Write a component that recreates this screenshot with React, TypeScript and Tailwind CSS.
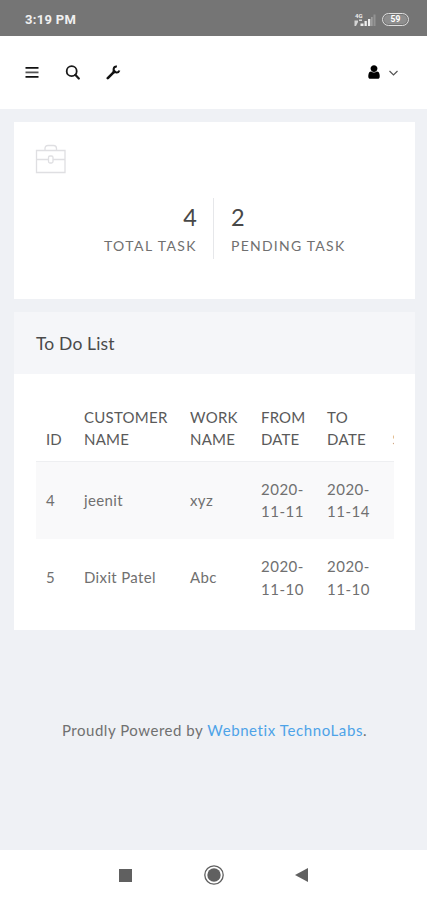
type Task = {
  id: number
  customer: string
  work: string
  from: string[]
  to: string[]
}

const tasks: Task[] = [
  { id: 4, customer: "jeenit", work: "xyz", from: ["2020-", "11-11"], to: ["2020-", "11-14"] },
  { id: 5, customer: "Dixit Patel", work: "Abc", from: ["2020-", "11-10"], to: ["2020-", "11-10"] },
]

function StatusBar() {
  return (
    <div className="h-9 shrink-0 bg-[#757575] flex items-center justify-between pl-[25px] pr-[18px] pt-[3px]">
      <span className="font-['Roboto',sans-serif] font-bold text-[13px] leading-4 tracking-[0.3px] text-[#f0f0f0]">3:19 PM</span>
      <div className="flex items-center gap-[5px]">
        <svg width="24" height="14" viewBox="0 0 24 14" fill="#eeeeee">
          <text x="2" y="5" fontSize="6" fontWeight="700" fontFamily="Roboto, sans-serif">4G</text>
          <path d="M1.500 7.500h3.500v1.500l-2 4h-1.500zM6 6.500h3v1.500h-3z" opacity=".8" />
          <path d="M7.500 10.500h3v2.500h-3zM11.500 8h2.300v5h-2.300zM15 6h2.300v7h-2.300z" />
          <path d="M18.300 4h1.200v9h-1.200z" opacity=".5" />
          <path d="M20.500 1.500h2v11.500h-2z" opacity=".25" />
        </svg>
        <div className="w-[27px] h-[13px] rounded-full border-[1.5px] border-[#dedede] p-px">
          <div className="h-full w-full rounded-full bg-[#8d8d8d] flex items-center justify-center font-['Roboto',sans-serif] font-bold text-[8.5px] leading-none text-white">
            59
          </div>
        </div>
      </div>
    </div>
  )
}

function TopBar() {
  return (
    <header className="h-[73px] shrink-0 bg-white flex items-center justify-between pl-[25px] pr-[28px] pb-px">
      <div className="flex items-center">
        <svg width="14" height="14" viewBox="0 0 14 14">
          <path d="M.5 2h13v1.800H.5zM.5 11h13v1.800H.5z" fill="#111" />
          <path d="M.5 6.500h13v1.800H.5z" fill="#555" />
        </svg>
        <svg className="ml-[26px] mt-px" width="15" height="15" viewBox="0 0 15 15" fill="none" stroke="#1a1a1a">
          <circle cx="6.700" cy="6.200" r="5" strokeWidth="1.800" />
          <path d="M10.300 9.800l3.500 3.700" strokeWidth="2.200" strokeLinecap="round" />
        </svg>
        <svg className="ml-[26px] mt-px" width="15" height="15" viewBox="0 0 15 15" fill="none" stroke="#111">
          <path d="M1.800 13.200l6.500-6.500" strokeWidth="2.600" strokeLinecap="round" />
          <path d="M10.900 1.500a3 3 0 1 0 2.500 4" strokeWidth="2" />
          <path d="M7.300 5.500l2.200 2.200" strokeWidth="2.500" />
        </svg>
      </div>
      <div className="flex items-center gap-[6px]">
        <svg width="16" height="16" viewBox="0 0 1792 1792" fill="#000">
          <path d="M1536 1399q0 109-62.500 187t-150.500 78h-854q-88 0-150.500-78t-62.500-187q0-85 8.500-160.500t31.500-152 58.500-131 94-89 134.500-34.500q131 128 313 128t313-128q76 0 134.500 34.500t94 89 58.500 131 31.500 152 8.500 160.500zm-256-887q0 159-112.500 271.500t-271.500 112.500-271.500-112.500-112.500-271.500 112.500-271.500 271.500-112.500 271.500 112.500 112.500 271.500z" />
        </svg>
        <svg className="mt-px" width="11" height="8" viewBox="0 0 11 8" fill="none" stroke="#555" strokeWidth="1.200">
          <path d="M1.500 2l4 4 4-4" />
        </svg>
      </div>
    </header>
  )
}

function Summary() {
  return (
    <section className="h-[177px] bg-white pt-[22px]">
      <svg className="ml-[21px]" width="32" height="31" viewBox="0 0 32 31" fill="none" stroke="#dfdfe2" strokeWidth="1.300">
        <path d="M1.500 6.500h28.500v22H1.500zM1.500 15.500h12M18 15.500h12" />
        <path d="M10 6.500V4.500q0-3 3-3h5.500q3 0 3 3v2" />
        <rect x="13.500" y="12" width="4.500" height="7" rx="1.500" />
      </svg>
      <div className="mt-[23px] flex">
        <div className="w-[200px] h-[61px] pr-[16px] pt-[4px] text-right border-r border-[#e6e7ea]">
          <div className="text-[23.5px] leading-[30px] text-[#484848]">4</div>
          <div className="mt-[4px] text-[14px] leading-[20px] tracking-[1.420px] text-[#707070]">TOTAL TASK</div>
        </div>
        <div className="pl-[17px] pt-[4px]">
          <div className="text-[23.5px] leading-[30px] text-[#484848]">2</div>
          <div className="mt-[4px] text-[14px] leading-[20px] tracking-[1.250px] text-[#707070]">PENDING TASK</div>
        </div>
      </div>
    </section>
  )
}

function TodoList() {
  return (
    <section className="mt-[13px] h-[318px] bg-white">
      <h2 className="h-[62px] bg-[#f5f6f9] pl-[22px] pt-[3px] flex items-center text-[17.5px] tracking-[0.15px] text-[#4a4a4a]">
        To Do List
      </h2>
      <div className="ml-[22px] mr-[21px] pt-[23px] overflow-hidden">
        <table className="w-[430px] table-fixed text-left text-[15px] leading-[22.5px] text-[#707070]">
          <colgroup>
            <col className="w-[38px]" />
            <col className="w-[106px]" />
            <col className="w-[71px]" />
            <col className="w-[66px]" />
            <col className="w-[65px]" />
            <col className="w-[84px]" />
          </colgroup>
          <thead>
            <tr className="h-[64px] border-b border-[#eeeff1] align-bottom text-[#5a5a5a]">
              <th className="px-[10px] pb-[10px] font-normal">ID</th>
              <th className="px-[10px] pb-[10px] font-normal tracking-[0.25px]">CUSTOMER<br />NAME</th>
              <th className="px-[10px] pb-[10px] font-normal tracking-[0.25px]">WORK<br />NAME</th>
              <th className="px-[10px] pb-[10px] font-normal tracking-[0.15px]">FROM<br />DATE</th>
              <th className="px-[10px] pb-[10px] font-normal tracking-[0.35px]">TO<br />DATE</th>
              <th className="pl-[10.5px] pb-[10px] font-normal text-[#888]">STATUS</th>
            </tr>
          </thead>
          <tbody>
            {tasks.map((task) => (
              <tr key={task.id} className="h-[77px] odd:h-[78px] odd:bg-[#f9f9fa]">
                <td className="px-[10px] pb-px">{task.id}</td>
                <td className="px-[10px] pb-px tracking-[0.35px]">{task.customer}</td>
                <td className="px-[10px] pb-px tracking-[0.4px]">{task.work}</td>
                <td className="pl-[10px] tracking-[0.5px]">{task.from[0]}<br />{task.from[1]}</td>
                <td className="pl-[10px] tracking-[0.5px]">{task.to[0]}<br />{task.to[1]}</td>
                <td />
              </tr>
            ))}
          </tbody>
        </table>
      </div>
    </section>
  )
}

function NavBar() {
  return (
    <nav className="h-[50px] shrink-0 bg-white flex items-center pl-[119px]">
      <div className="w-[13px] h-[13px] bg-[#606060]" />
      <svg className="ml-[72px]" width="20" height="20" viewBox="0 0 20 20">
        <circle cx="10" cy="10" r="9.200" fill="none" stroke="#606060" strokeWidth="1.300" />
        <circle cx="10" cy="10" r="6.700" fill="#606060" />
      </svg>
      <svg className="ml-[71px]" width="13" height="14" viewBox="0 0 13 14" fill="#606060">
        <path d="M0 7L13 0v14z" />
      </svg>
    </nav>
  )
}

export default function App() {
  return (
    <div className="w-full h-[900px] flex flex-col overflow-hidden bg-[#eff1f5] font-['Lato','Open_Sans',sans-serif]">
      <StatusBar />
      <TopBar />
      <main className="flex-1 pt-[13px] pl-[14px] pr-[12px]">
        <Summary />
        <TodoList />
        <footer className="mt-[89px] text-center text-[15px] leading-[22px] tracking-[0.53px] text-[#707070]">
          Proudly Powered by <a className="tracking-[0.6px] text-[#4da3e8]">Webnetix TechnoLabs</a>.
        </footer>
      </main>
      <NavBar />
    </div>
  )
}
